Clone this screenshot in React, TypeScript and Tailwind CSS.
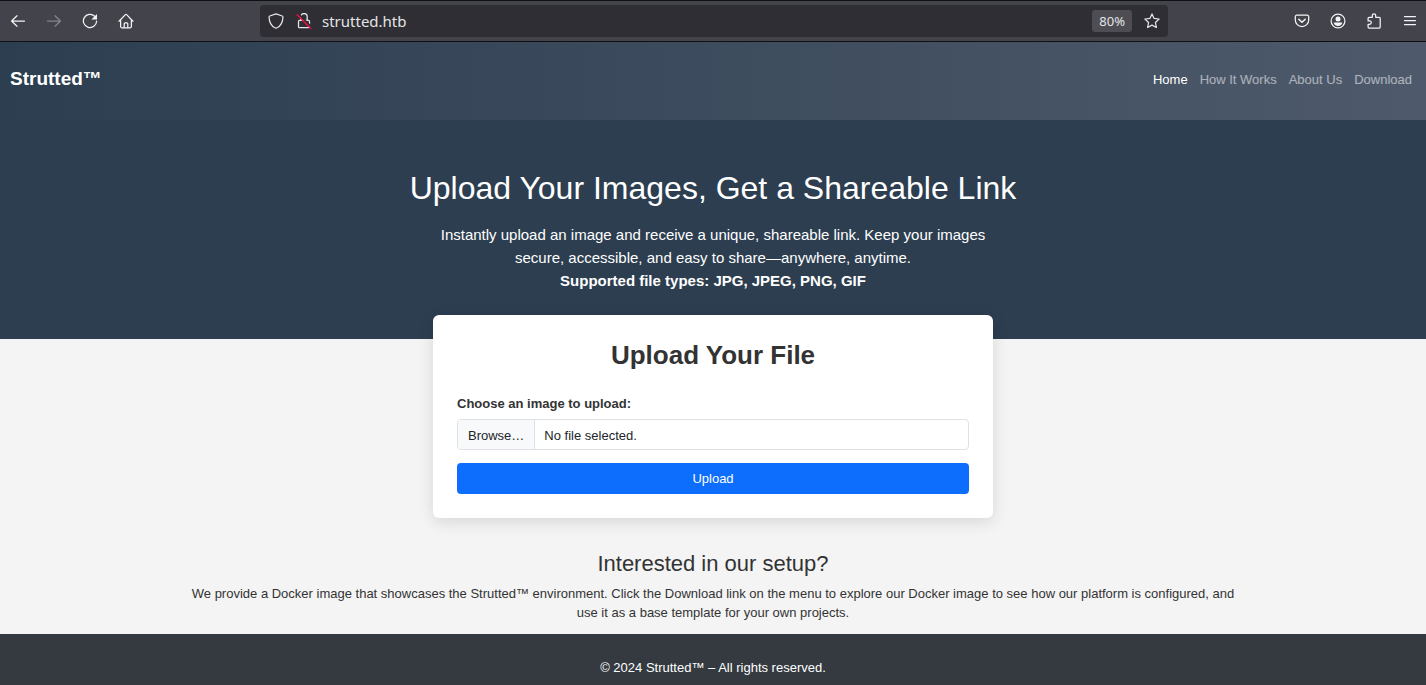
import type { ReactNode } from "react";

function Icon({ children, className = "" }: { children: ReactNode; className?: string }) {
  return (
    <svg
      viewBox="0 0 16 16"
      className={`size-4 shrink-0 ${className}`}
      fill="none"
      stroke="currentColor"
      strokeWidth="1.25"
      strokeLinecap="round"
      strokeLinejoin="round"
      aria-hidden="true"
    >
      {children}
    </svg>
  );
}

function ToolButton({ label, dim, children }: { label: string; dim?: boolean; children: ReactNode }) {
  return (
    <button
      type="button"
      aria-label={label}
      disabled={dim}
      className={`flex size-8 items-center justify-center ${dim ? "text-[#85858a]" : "text-[#f4f4f6]"}`}
    >
      {children}
    </button>
  );
}

function BrowserBar() {
  return (
    <div className="flex h-[42px] shrink-0 items-center border-y border-[#101014] bg-[#43444b] pl-0.5">
      <div className="flex gap-1">
        <ToolButton label="Back">
          <Icon><path d="M14.500 8H1.800M7 2.800 1.600 8 7 13.200" /></Icon>
        </ToolButton>
        <ToolButton label="Forward" dim>
          <Icon><path d="M1.500 8h12.700M9 2.800 14.400 8 9 13.200" /></Icon>
        </ToolButton>
        <ToolButton label="Reload">
          <Icon>
            <path d="M12.600 3.200A6.600 6.600 0 1 0 14.600 8.200" />
            <path d="M15 .9v5.600H9.400z" fill="currentColor" stroke="none" />
          </Icon>
        </ToolButton>
        <ToolButton label="Home">
          <Icon>
            <path d="M1 8.200 7.400 1.600a.9.9 0 0 1 1.200 0L15 8.200M2.600 7v6.600a1.200 1.200 0 0 0 1.200 1.200h8.400a1.200 1.200 0 0 0 1.200-1.200V7" />
            <path d="M6.200 14.600v-3.800a1 1 0 0 1 1-1h1.600a1 1 0 0 1 1 1v3.800" />
          </Icon>
        </ToolButton>
      </div>

      <div className="mx-[118px] flex h-8 min-w-0 flex-1 items-center rounded bg-[#2f2e34] px-2 text-[#e4e4e7]">
        <Icon>
          <path d="M8 .9 14.300 3c.4.1.6.4.6.8 0 5.400-2 9.400-6.300 11.200a1.500 1.500 0 0 1-1.200 0C3.100 13.200 1.100 9.200 1.100 3.800c0-.4.2-.7.6-.8z" />
        </Icon>
        <Icon className="ml-3">
          <path d="M4.800 7V3.700a3.200 3.200 0 0 1 6.400 0V7M3.500 7.300h9a1 1 0 0 1 1 1v5.400a1 1 0 0 1-1 1h-9a1 1 0 0 1-1-1V8.300a1 1 0 0 1 1-1z" />
          <path d="M3 1.500 15.500 14" stroke="#2f2e34" strokeWidth="1.800" />
          <path d="M1.200 1.800 14.800 15.400" stroke="#f0103f" strokeWidth="1.400" />
        </Icon>
        <input
          type="text"
          aria-label="Address"
          defaultValue="strutted.htb"
          className="ml-2.5 h-8 min-w-0 flex-1 bg-transparent font-['Noto_Sans',sans-serif] text-[15px] outline-none"
        />
        <button
          type="button"
          className="h-[22px] rounded-[3px] bg-[#4e4d53] px-[7px] font-['Noto_Sans',sans-serif] text-[13px] leading-[22px]"
        >
          80%
        </button>
        <button type="button" aria-label="Bookmark this page" className="ml-3">
          <Icon>
            <path d="m8 .9 2.100 4.500 5 .6-3.700 3.500 1 5L8 12.100l-4.400 2.400 1-5L.9 6l5-.6z" />
          </Icon>
        </button>
      </div>

      <div className="flex gap-1">
        <ToolButton label="Save to Pocket">
          <Icon>
            <path d="M2.700 2.200h10.600a1.400 1.400 0 0 1 1.400 1.400v3.300a6.700 6.700 0 0 1-13.400 0V3.600a1.400 1.400 0 0 1 1.400-1.400z" />
            <path d="M4.800 6.200 8 9.300l3.200-3.100" strokeWidth="1.500" />
          </Icon>
        </ToolButton>
        <ToolButton label="Account">
          <Icon>
            <circle cx="8" cy="8" r="6.900" />
            <circle cx="8" cy="6" r="2.500" fill="currentColor" stroke="none" />
            <path d="M3.800 9.500h8.400c0 2.100-1.900 3.400-4.200 3.400s-4.200-1.300-4.200-3.400z" fill="currentColor" stroke="none" />
          </Icon>
        </ToolButton>
        <ToolButton label="Extensions">
          <Icon>
            <path d="M6.300 4.300V2.600a1.700 1.700 0 0 1 3.400 0v1.700h3.500a1 1 0 0 1 1 1v8.800a1 1 0 0 1-1 1H3.100a1 1 0 0 1-1-1v-2.800h1.500a1.700 1.700 0 0 0 0-3.400H2.100V5.300a1 1 0 0 1 1-1z" />
          </Icon>
        </ToolButton>
        <ToolButton label="Menu">
          <Icon><path d="M2.500 3.500h11M2.500 7.500h11M2.500 11.500h11" /></Icon>
        </ToolButton>
      </div>
    </div>
  );
}

const links = ["How It Works", "About Us", "Download"];

export default function App() {
  return (
    <div className="flex min-h-screen flex-col bg-[#f4f4f4] font-['Liberation_Sans',Arial,sans-serif] text-[13px] leading-[19px] text-[#333]">
      <BrowserBar />

      <header className="flex h-[78px] shrink-0 items-center justify-between bg-linear-to-r from-[#2c3e50] to-[#4e5a6b] pr-3.5 pb-1 pl-2.5">
        <a href="#home" className="text-[19px] leading-7 font-bold text-white">Strutted™</a>
        <nav className="flex gap-3">
          <a href="#home" className="text-white">Home</a>
          {links.map((link) => (
            <a key={link} href="#menu" className="text-white/55">{link}</a>
          ))}
        </nav>
      </header>

      <section className="bg-[#2c3e50] px-4 pt-12 pb-[47px] text-center text-white">
        <h1 className="text-[32px] leading-10">Upload Your Images, Get a Shareable Link</h1>
        <p className="mx-auto mt-[15px] max-w-[580px] text-[15px] leading-[23px]">
          Instantly upload an image and receive a unique, shareable link. Keep your images secure,
          accessible, and easy to share—anywhere, anytime.
          <br />
          <strong>Supported file types: JPG, JPEG, PNG, GIF</strong>
        </p>
      </section>

      <main className="px-4">
        <form
          onSubmit={(event) => event.preventDefault()}
          className="relative mx-auto -mt-6 max-w-[560px] rounded-md bg-white p-6 shadow-[0_4px_16px_rgba(0,0,0,0.12)]"
        >
          <h2 className="text-center text-[26px] leading-8 font-bold">Upload Your File</h2>
          <label htmlFor="upload" className="mt-[23px] block font-bold">Choose an image to upload:</label>
          <input id="upload" type="file" accept="image/*" className="sr-only" />
          <label
            htmlFor="upload"
            className="mt-1.5 flex h-[31px] overflow-hidden rounded border border-[#dee2e6] leading-[31px] text-[#212529]"
          >
            <span className="border-r border-[#dee2e6] bg-[#f8f9fa] px-2.5">Browse…</span>
            <span className="px-[9px]">No file selected.</span>
          </label>
          <button type="submit" className="mt-[13px] h-[31px] w-full rounded bg-[#0d6efd] text-white">
            Upload
          </button>
        </form>

        <section className="mx-auto mt-8 max-w-[1056px] pb-3 text-center">
          <h3 className="text-[22px] leading-7">Interested in our setup?</h3>
          <p className="mt-1.5">
            We provide a Docker image that showcases the Strutted™ environment. Click the Download link
            on the menu to explore our Docker image to see how our platform is configured, and use it as
            a base template for your own projects.
          </p>
        </section>
      </main>

      <footer className="flex-1 bg-[#343a40] pt-6 pb-2 text-center text-white">
        © 2024 Strutted™ – All rights reserved.
      </footer>
    </div>
  );
}
